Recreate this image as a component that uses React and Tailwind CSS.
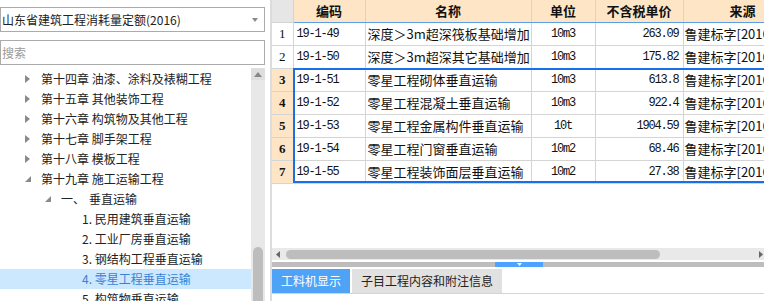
import React from "react";

const tree = [
  { lvl: 0, kind: "closed", text: "第十四章 油漆、涂料及裱糊工程" },
  { lvl: 0, kind: "closed", text: "第十五章 其他装饰工程" },
  { lvl: 0, kind: "closed", text: "第十六章 构筑物及其他工程" },
  { lvl: 0, kind: "closed", text: "第十七章 脚手架工程" },
  { lvl: 0, kind: "closed", text: "第十八章 模板工程" },
  { lvl: 0, kind: "open", text: "第十九章 施工运输工程" },
  { lvl: 1, kind: "open", text: "一、", text2: "垂直运输" },
  { lvl: 2, text: "1. 民用建筑垂直运输" },
  { lvl: 2, text: "2. 工业厂房垂直运输" },
  { lvl: 2, text: "3. 钢结构工程垂直运输" },
  { lvl: 2, text: "4. 零星工程垂直运输", sel: true },
  { lvl: 2, text: "5. 构筑物垂直运输" },
];

const rows = [
  ["1", "19-1-49", "深度＞3m超深筏板基础增加", "10m3", "263.09"],
  ["2", "19-1-50", "深度＞3m超深其它基础增加", "10m3", "175.82"],
  ["3", "19-1-51", "零星工程砌体垂直运输", "10m3", "613.8"],
  ["4", "19-1-52", "零星工程混凝土垂直运输", "10m3", "922.4"],
  ["5", "19-1-53", "零星工程金属构件垂直运输", "10t", "1904.59"],
  ["6", "19-1-54", "零星工程门窗垂直运输", "10m2", "68.46"],
  ["7", "19-1-55", "零星工程装饰面层垂直运输", "10m2", "27.38"],
];

function Closed() {
  return (
    <svg width="5" height="8" viewBox="0 0 5 8" className="shrink-0">
      <path d="M0 0 L5 4 L0 8 Z" fill="#8a8a8a" />
    </svg>
  );
}
function Open() {
  return (
    <svg width="6" height="6" viewBox="0 0 6 6" className="shrink-0">
      <path d="M6 0 L6 6 L0 6 Z" fill="#8a8a8a" />
    </svg>
  );
}

function TreeItem({ it }) {
  const base =
    "h-[20px] flex items-center whitespace-nowrap text-[12px] leading-none " +
    (it.sel ? "bg-[#cce8ff] text-[#3d7fd4]" : "text-[#222]");
  if (it.lvl === 0)
    return (
      <div className={base}>
        <div className="w-[25px]" />
        <div className="w-[16px] flex items-center">
          {it.kind === "open" ? <Open /> : <Closed />}
        </div>
        <span>{it.text}</span>
      </div>
    );
  if (it.lvl === 1)
    return (
      <div className={base}>
        <div className="w-[45px]" />
        <div className="w-[16px] flex items-center">
          <Open />
        </div>
        <span>{it.text}</span>
        <span className="ml-[4px]">{it.text2}</span>
      </div>
    );
  return (
    <div className={base}>
      <div className="w-[82px]" />
      <span>{it.text}</span>
    </div>
  );
}

function LeftPanel() {
  return (
    <div className="w-[265px] mr-[5px] h-full flex flex-col pt-[7px] shrink-0">
      <div className="h-[25px] border border-[#ababab] flex items-center justify-between pl-[1px] pr-[6px] text-[12px] text-[#222]">
        <span>山东省建筑工程消耗量定额(2016)</span>
        <svg width="6" height="4" viewBox="0 0 6 4">
          <path d="M0 0 L6 0 L3 4 Z" fill="#8a8a8a" />
        </svg>
      </div>
      <div className="mt-[8px] h-[25px] border border-[#ababab] flex items-center pl-[1px] text-[12px] text-[#9a9a9a]">
        搜索
      </div>
      <div className="mt-[3px] flex-1 flex min-h-0 overflow-hidden">
        <div className="flex-1 pt-[1px] overflow-hidden">
          {tree.map((it, i) => (
            <TreeItem key={i} it={it} />
          ))}
        </div>
        <div className="w-[14px] bg-[#e8e8e8] flex flex-col items-center">
          <div className="h-[12px] w-full bg-[#dedede] flex items-center justify-center">
            <svg width="8" height="5" viewBox="0 0 8 5">
              <path d="M0 5 L4 0 L8 5 Z" fill="#888" />
            </svg>
          </div>
          <div className="mt-[167px] w-[10px] flex-1 rounded-t-full bg-[#bdbdbd]" />
        </div>
      </div>
    </div>
  );
}

const cell = "border-r border-b border-[#d4d4d4] h-[23px] p-0";
const num = " text-[12px] tracking-[-1.2px] font-['Liberation_Mono',monospace]";

function Table() {
  return (
    <div className="relative">
      <table className="table-fixed border-collapse w-[530px] text-[#111]">
        <colgroup>
          <col className="w-[21px]" />
          <col className="w-[72px]" />
          <col className="w-[166px]" />
          <col className="w-[64px]" />
          <col className="w-[88px]" />
          <col className="w-[119px]" />
        </colgroup>
        <thead>
          <tr className="h-[22px]">
            <th className="bg-[#e6e6e6] border-r border-b border-[#d4d4d4] p-0" />
            {["编码", "名称", "单位", "不含税单价", "来源"].map((h) => (
              <th
                key={h}
                className="bg-[#fde5c6] border-r border-[#d4d4d4] border-b border-b-[#5a9ee8] p-0 text-[13px] font-bold text-center whitespace-nowrap overflow-hidden"
              >
                {h}
              </th>
            ))}
          </tr>
        </thead>
        <tbody>
          {rows.map((r, i) => {
            const sel = i >= 2;
            return (
              <tr key={i} className="h-[23px]">
                <td
                  className={
                    cell +
                    " text-center text-[13px] font-['Liberation_Serif',serif] " +
                    (sel ? "bg-[#fde5c6] font-bold" : "bg-white")
                  }
                >
                  {r[0]}
                </td>
                <td className={cell + " pl-[3px]" + num}>{r[1]}</td>
                <td className={cell + " pl-[2px] text-[13px] whitespace-nowrap overflow-hidden"}>
                  {r[2]}
                </td>
                <td className={cell + " text-center" + num}>{r[3]}</td>
                <td className={cell + " text-right pr-[4px]" + num}>{r[4]}</td>
                <td className={cell + " pl-[1px] text-[13px] whitespace-nowrap overflow-hidden"}>
                  鲁建标字[2016]
                </td>
              </tr>
            );
          })}
        </tbody>
      </table>
      <div className="absolute left-[21px] top-[68px] w-[480px] h-[115px] border-2 border-r-0 border-[#1a6fe8] pointer-events-none" />
    </div>
  );
}

function RightPanel() {
  return (
    <div className="flex-1 h-full border-l-2 border-[#dcdcdc] flex flex-col overflow-hidden min-w-0">
      <div className="h-[248px] overflow-hidden">
        <Table />
      </div>
      <div className="h-[12px] bg-[#e9e9e9] flex items-center">
        <svg width="4" height="7" viewBox="0 0 4 7" className="ml-[4px]">
          <path d="M4 0 L0 3.5 L4 7 Z" fill="#666" />
        </svg>
        <div className="ml-[6px] w-[374px] h-[9px] rounded-full bg-[#bdbdbd]" />
        <div className="flex-1" />
        <svg width="4" height="7" viewBox="0 0 4 7" className="mr-[1px]">
          <path d="M0 0 L4 3.5 L0 7 Z" fill="#666" />
        </svg>
      </div>
      <div className="mt-[2px] h-[5px] bg-[#bdbdbd] flex">
        <div className="ml-[223px] w-[48px] h-full bg-[#4da3ff] flex justify-center items-start">
          <svg width="5" height="3" viewBox="0 0 5 3" className="mt-[1px]">
            <path d="M0 0 L5 0 L2.5 3 Z" fill="#fff" />
          </svg>
        </div>
      </div>
      <div className="mt-[2px] h-[25px] flex gap-[2px] border-b border-[#d4d4d4] text-[12px]">
        <div className="w-[78px] bg-[#4fa3f7] text-white flex items-center justify-center">
          工料机显示
        </div>
        <div className="w-[150px] bg-[#e1e1e1] text-[#222] flex items-center justify-center">
          子目工程内容和附注信息
        </div>
      </div>
    </div>
  );
}

export default function App() {
  return (
    <div className="w-[764px] h-[301px] bg-white flex overflow-hidden font-['Noto_Sans_CJK_SC','Noto_Sans',sans-serif]">
      <LeftPanel />
      <RightPanel />
    </div>
  );
}
